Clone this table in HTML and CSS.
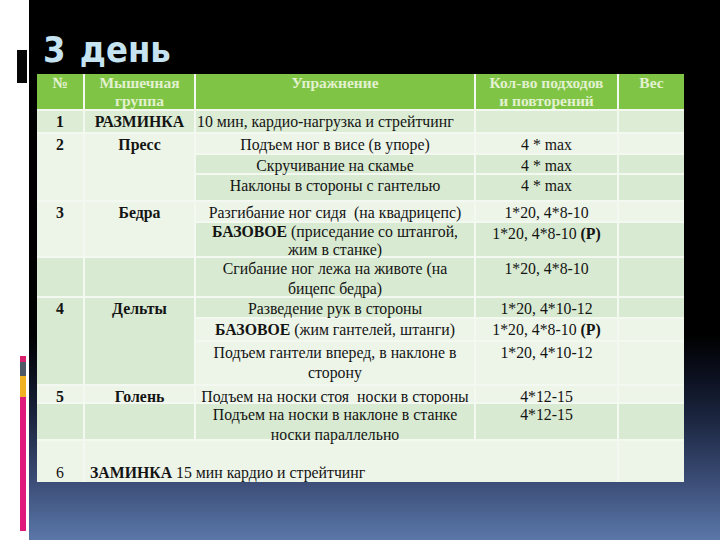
FILE: index.html
```html
<!DOCTYPE html>
<html lang="ru">
<head>
<meta charset="utf-8">
<title>3 день</title>
<link rel="stylesheet" href="styles.css">
</head>
<body>
<div class="rail">
  <div class="mark"></div>
  <div class="stripe">
    <div class="s-pink1"></div>
    <div class="s-grey"></div>
    <div class="s-yellow"></div>
    <div class="s-pink2"></div>
  </div>
</div>
<div class="slide">
  <h1 class="title">3 день</h1>
  <div class="table">
    <div class="hd">№</div>
    <div class="hd">Мышечная<br>группа</div>
    <div class="hd">Упражнение</div>
    <div class="hd">Кол-во подходов<br>и повторений</div>
    <div class="hd">Вес</div>

    <div class="md b">1</div>
    <div class="md b">РАЗМИНКА</div>
    <div class="md left">10 мин, кардио-нагрузка и стрейтчинг</div>
    <div class="md"></div>
    <div class="md"></div>

    <div class="lt b r3">2</div>
    <div class="lt b r3">Пресс</div>
    <div class="lt">Подъем ног в висе (в упоре)</div>
    <div class="lt">4 * max</div>
    <div class="lt"></div>
    <div class="dk">Скручивание на скамье</div>
    <div class="dk">4 * max</div>
    <div class="dk"></div>
    <div class="dk">Наклоны в стороны с гантелью</div>
    <div class="dk">4 * max</div>
    <div class="dk"></div>

    <div class="lt b r2">3</div>
    <div class="lt b r2">Бедра</div>
    <div class="lt">Разгибание ног сидя &nbsp;(на квадрицепс)</div>
    <div class="lt">1*20, 4*8-10</div>
    <div class="lt"></div>
    <div class="dk tight ov"><b>БАЗОВОЕ</b> (приседание со штангой,<br>жим в станке)</div>
    <div class="dk">1*20, 4*8-10 <b>(Р)</b></div>
    <div class="dk"></div>
    <div class="dk"></div>
    <div class="dk"></div>
    <div class="dk ov">Сгибание ног лежа на животе (на<br>бицепс бедра)</div>
    <div class="dk">1*20, 4*8-10</div>
    <div class="dk"></div>

    <div class="dk b r3">4</div>
    <div class="dk b r3">Дельты</div>
    <div class="dk">Разведение рук в стороны</div>
    <div class="dk">1*20, 4*10-12</div>
    <div class="dk"></div>
    <div class="lt"><b>БАЗОВОЕ</b> (жим гантелей, штанги)</div>
    <div class="lt">1*20, 4*8-10 <b>(Р)</b></div>
    <div class="lt"></div>
    <div class="lt ov">Подъем гантели вперед, в наклоне в<br>сторону</div>
    <div class="lt">1*20, 4*10-12</div>
    <div class="lt"></div>

    <div class="lt b">5</div>
    <div class="lt b">Голень</div>
    <div class="lt">Подъем на носки стоя &nbsp;носки в стороны</div>
    <div class="lt">4*12-15</div>
    <div class="lt"></div>
    <div class="dk"></div>
    <div class="dk"></div>
    <div class="dk ov">Подъем на носки в наклоне в станке<br>носки параллельно</div>
    <div class="dk">4*12-15</div>
    <div class="dk"></div>

    <div class="lt bottom">6</div>
    <div class="lt bottom left2 c3"><b>ЗАМИНКА</b> 15 мин кардио и стрейтчинг</div>
    <div class="lt"></div>
  </div>
</div>
</body>
</html>
```

FILE: styles.css
```css
html, body {
  margin: 0;
  padding: 0;
}
body {
  width: 720px;
  height: 540px;
  display: flex;
  background: #ffffff;
  overflow: hidden;
}
.rail {
  width: 29px;
  flex: none;
  display: flex;
  flex-direction: column;
}
.mark {
  margin: 50px 0 0 17px;
  width: 10px;
  height: 33px;
  background: #050505;
}
.stripe {
  margin: auto 0 9px 20px;
  width: 6px;
  display: flex;
  flex-direction: column;
}
.s-pink1 { height: 6px; background: #d8206f; }
.s-grey { height: 14px; background: #4e5866; }
.s-yellow { height: 21px; background: #f0b223; }
.s-pink2 { height: 134px; background: #e01a7c; }

.slide {
  flex: 1;
  padding: 29px 0 0 8px;
  background: linear-gradient(to bottom, #000000 0%, #000000 62%, #0c1120 70%, #1c2742 78%, #3b4c76 89%, #5a77a8 100%);
}
.title {
  margin: 0 0 3px 6px;
  font-family: "DejaVu Sans Condensed", "DejaVu Sans", sans-serif;
  font-weight: bold;
  font-size: 36px;
  line-height: 42px;
  color: #c6e3f2;
  word-spacing: 3px;
}
.table {
  display: grid;
  width: max-content;
  grid-template-columns: 46px 109px 278px 141px 65px;
  grid-template-rows: 35px 21px 19px 18px 25px 19px 33px 38px 19px 21px 42px 16px 35px 41px;
  gap: 2px;
  background: #f3f8f0;
  font-family: "Liberation Serif", "Times New Roman", serif;
  font-size: 15.8px;
  line-height: 19.5px;
  color: #141414;
}
.table > div {
  padding: 1px 0 0;
  text-align: center;
  white-space: nowrap;
}
.table > .hd {
  background: #7fc445;
  color: #e2f1cf;
  font-weight: bold;
  font-size: 15.5px;
  line-height: 18px;
  padding-top: 0;
}
.lt { background: #edf5e9; }
.dk { background: #d8ead1; }
.md { background: #dcecd5; }
.b { font-weight: bold; }
.r2 { grid-row: span 2; }
.r3 { grid-row: span 3; }
.c3 { grid-column: span 3; }
.ov { z-index: 1; }
.table > .tight { line-height: 18px; padding-top: 0; }
.table > .left { text-align: left; padding-left: 1px; }
.table > .left2 { text-align: left; padding-left: 5px; }
.table > .bottom { padding-top: 22px; }
```
